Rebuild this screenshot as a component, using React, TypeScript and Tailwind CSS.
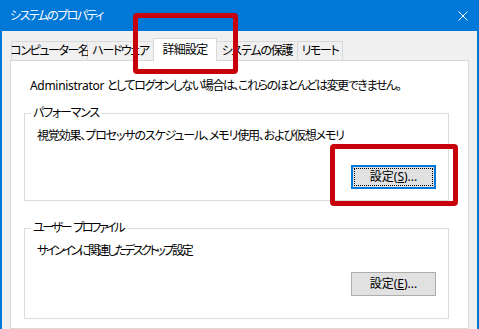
const font =
  "font-['Noto_Sans','Noto_Sans_CJK_JP',sans-serif] [font-feature-settings:'palt'] tracking-[-0.8px]";

function CloseIcon() {
  return (
    <svg width="10" height="10" viewBox="0 0 10 10" aria-hidden>
      <path d="M0.5 0.5 L9.5 9.5 M9.5 0.5 L0.5 9.5" stroke="#ffffff" strokeWidth="1" fill="none" />
    </svg>
  );
}

function Tab({ label, className }: { label: string; className: string }) {
  return (
    <div
      className={
        "flex h-[19px] shrink-0 items-center justify-center whitespace-nowrap border-t border-r border-[#d9d9d9] bg-[#f0f0f0] " +
        className
      }
    >
      {label}
    </div>
  );
}

export default function App() {
  return (
    <div
      className={
        "relative flex h-[329px] w-[479px] flex-col overflow-hidden border-x-2 border-[#0078d7] bg-[#f0f0f0] text-[12px] leading-[16px] text-black " +
        font
      }
    >
      {/* title bar */}
      <div className="flex h-[31px] shrink-0 items-center justify-between bg-[#0078d7] pl-[8px] pr-[9px] text-white">
        <span className="tracking-[-1.6px]">システムのプロパティ</span>
        <CloseIcon />
      </div>

      <div className="flex min-h-0 flex-1 flex-col px-[8px] pt-[7px]">
        {/* tabs */}
        <div className="flex items-end pl-px">
          <Tab label="コンピューター名" className="w-[77px] border-l tracking-[-1.4px]" />
          <Tab label="ハードウェア" className="w-[65px] border-r-0 tracking-[-1.4px]" />
          <div className="relative z-10 -mb-px flex h-[23px] w-[64px] shrink-0 items-center justify-center border-x border-t border-[#d9d9d9] bg-white">
            詳細設定
          </div>
          <Tab label="システムの保護" className="w-[81px] tracking-[-1.2px]" />
          <Tab label="リモート" className="w-[45px] tracking-[-1.4px]" />
        </div>

        {/* panel */}
        <div className="flex flex-1 flex-col border border-[#d9d9d9] bg-white">
          <p className="ml-[19px] mt-[17px] whitespace-nowrap tracking-[-1.4px]">
            <span className="tracking-[-0.3px]">Administrator </span>
            としてログオンしない場合は、これらのほとんどは変更できません。
          </p>

          <fieldset className="ml-[13px] mr-[19px] mt-[11px] border border-[#dcdcdc]">
            <legend className="ml-[6px] px-[2px] tracking-[-1.2px]">パフォーマンス</legend>
            <div className="flex flex-col">
              <p className="ml-[12px] mt-[7px] whitespace-nowrap tracking-[-1.15px]">
                視覚効果、プロセッサのスケジュール、メモリ使用、および仮想メモリ
              </p>
              <button className="mb-[11px] mr-[12px] mt-[21px] flex h-[24px] w-[85px] self-end border-2 border-[#0078d7] bg-[#e1e1e1] p-px tracking-normal">
                <span className="flex h-full w-full items-center justify-center border border-dotted border-black">
                  設定(<span className="underline">S</span>)...
                </span>
              </button>
            </div>
          </fieldset>

          <fieldset className="ml-[13px] mr-[19px] mt-[19px] border border-[#dcdcdc]">
            <legend className="ml-[6px] px-[2px] tracking-[-2.4px]">
              ユーザー<span className="tracking-normal"> </span>プロファイル
            </legend>
            <div className="flex flex-col">
              <p className="ml-[12px] mt-[7px] whitespace-nowrap tracking-[-2.4px]">
                サインインに関連したデスクトップ設定
              </p>
              <button className="mb-[22px] mr-[12px] mt-[13px] flex h-[24px] w-[85px] items-center justify-center self-end border border-[#adadad] bg-[#e1e1e1] tracking-normal">
                設定(<span className="underline">E</span>)...
              </button>
            </div>
          </fieldset>
        </div>
      </div>

      {/* red highlight frames */}
      <div className="absolute left-[131px] top-[13px] h-[61px] w-[105px] rounded-[4px] border-[5px] border-[#c8000b]" />
      <div className="absolute left-[328px] top-[144px] h-[62px] w-[128px] rounded-[4px] border-[5px] border-[#c8000b]" />
    </div>
  );
}
